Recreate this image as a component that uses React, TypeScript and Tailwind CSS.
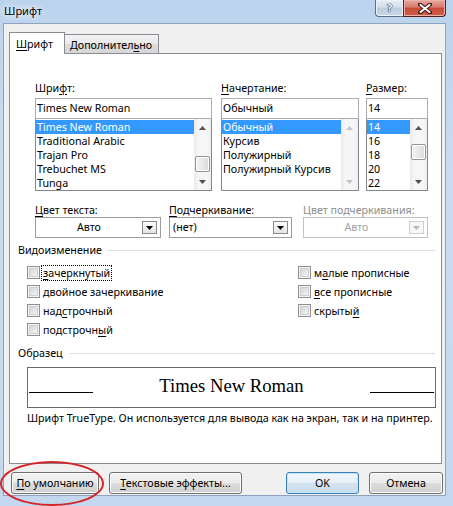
import React from "react";

const FONT = "font-['Noto_Sans','Open_Sans',sans-serif]";

function U({ children }: { children: React.ReactNode }) {
  return <span className="underline decoration-1 underline-offset-[2px]">{children}</span>;
}

function Arrow({ up, disabled }: { up?: boolean; disabled?: boolean }) {
  return (
    <div className="flex h-[17px] w-full items-center justify-center">
      <svg width="7" height="4" viewBox="0 0 7 4">
        <polygon
          points={up ? "0,4 3.5,0 7,4" : "0,0 3.5,4 7,0"}
          fill={disabled ? "#c3c3c3" : "#505050"}
        />
      </svg>
    </div>
  );
}

function Scrollbar({ thumb, disabled }: { thumb?: string; disabled?: boolean }) {
  return (
    <div className="flex w-[17px] shrink-0 flex-col bg-[linear-gradient(to_right,#e9e9e9,#f6f6f6_25%,#f6f6f6_75%,#eeeeee)]">
      <Arrow up disabled={disabled} />
      <div className="flex flex-1 flex-col px-[1px]">
        {thumb ? (
          <div
            className={`${thumb} rounded-[2px] border border-[#979797] bg-[linear-gradient(to_right,#f4f4f4,#e9e9e9_50%,#d9d9d9)] shadow-[inset_0_0_0_1px_#ffffff]`}
          />
        ) : null}
      </div>
      <Arrow disabled={disabled} />
    </div>
  );
}

function FontList({
  value,
  items,
  width,
  thumb,
  disabled,
}: {
  value: string;
  items: string[];
  width: string;
  thumb?: string;
  disabled?: boolean;
}) {
  return (
    <div className={`${width} flex flex-col`}>
      <div className="flex h-[21px] items-center border border-[#abadb3] bg-white pl-[1px] leading-[19px]">
        {value}
      </div>
      <div className="flex h-[72px] border border-t-0 border-[#828790] bg-white">
        <div className="flex min-w-0 flex-1 flex-col pt-[1px]">
          {items.map((it, i) => (
            <div
              key={it}
              className={`h-[14px] whitespace-nowrap pl-[1px] leading-[14px] ${
                i === 0 ? "bg-[#3399ff] text-white" : ""
              }`}
            >
              {it}
            </div>
          ))}
        </div>
        <Scrollbar thumb={thumb} disabled={disabled} />
      </div>
    </div>
  );
}

function Dropdown({
  width,
  text,
  center,
  disabled,
}: {
  width: string;
  text: string;
  center?: boolean;
  disabled?: boolean;
}) {
  return (
    <div
      className={`${width} flex h-[21px] items-center border bg-white ${
        disabled ? "border-[#c2c2c2] text-[#a3a3a3]" : "border-[#9c9c9c]"
      }`}
    >
      <div className={`flex-1 ${center ? "text-center" : "pl-[3px]"} leading-[19px]`}>{text}</div>
      <div
        className={`mr-[3px] flex h-[13px] w-[15px] items-center justify-center border ${
          disabled
            ? "border-[#cfcfcf] bg-[#f7f7f7]"
            : "border-[#8a8a8a] bg-[linear-gradient(#fdfdfd,#e4e4e4)]"
        }`}
      >
        <svg width="7" height="4" viewBox="0 0 7 4">
          <polygon points="0,0 3.5,4 7,0" fill={disabled ? "#b5b5b5" : "#000000"} />
        </svg>
      </div>
    </div>
  );
}

function Check({ children, focus }: { children: React.ReactNode; focus?: boolean }) {
  return (
    <div className="flex h-[19px] items-center">
      <div className="flex h-[13px] w-[13px] shrink-0 items-center justify-center border border-[#8f8f8f] bg-[#f4f4f4]">
        <div className="h-[9px] w-[9px] border border-[#cdcfd2] bg-[linear-gradient(135deg,#d3d6d9,#f4f4f4)]" />
      </div>
      <div
        className={`ml-[1px] border border-dotted pl-[1px] pr-[1px] leading-[14px] ${
          focus ? "border-black" : "border-transparent"
        }`}
      >
        {children}
      </div>
    </div>
  );
}

function GroupLabel({ text, gap }: { text: string; gap: string }) {
  return (
    <div className="flex h-[14px] items-center pl-[8px] pr-[6px]">
      <span className="leading-[14px]">{text}</span>
      <div className={`${gap} h-px flex-1 bg-[#d5dfe5]`} />
    </div>
  );
}

function Btn({
  width,
  children,
  primary,
  className = "",
}: {
  width: string;
  children: React.ReactNode;
  primary?: boolean;
  className?: string;
}) {
  return (
    <div
      className={`${width} ${className} flex h-[22px] items-center justify-center rounded-[3px] border ${
        primary
          ? "border-[#3c7fb1] bg-[linear-gradient(#f1f7fc,#e6eff7_50%,#d5e3ef_50%,#c9dbea)] shadow-[inset_0_0_0_1px_#bfe6fb]"
          : "border-[#707070] bg-[linear-gradient(#f2f2f2,#ebebeb_50%,#dddddd_50%,#cfcfcf)] shadow-[inset_0_0_0_1px_#fbfbfb]"
      }`}
    >
      <span className="leading-[14px]">{children}</span>
    </div>
  );
}

export default function App() {
  return (
    <div
      className={`relative flex h-[506px] w-[453px] flex-col overflow-hidden bg-[linear-gradient(180deg,#bcd3ed_0%,#cadcf1_35%,#c3d8ef_100%)] text-[10.7px] leading-[14px] text-black ${FONT}`}
    >
      {/* Title bar */}
      <div className="flex h-[23px] shrink-0 items-start justify-between">
        <div className="pl-[4px] pt-[4px] text-[11px] leading-[14px] [text-shadow:0_0_6px_#ffffff,0_0_10px_#ffffff]">
          Шрифт
        </div>
        <div className="mr-[7px] flex">
          <div className="flex h-[17px] w-[28px] items-center justify-center rounded-bl-[4px] border border-t-0 border-r-0 border-[#5d6e86] bg-[linear-gradient(#e7eef6,#d3deea_45%,#bccde0_50%,#c9d8e8)] shadow-[inset_0_0_0_1px_#eef3f9]">
            <span className="text-[11px] font-bold leading-[14px] text-[#f4f7fb] [text-shadow:0_0_1px_#27384f,0_0_1px_#27384f,0_0_1px_#27384f]">
              ?
            </span>
          </div>
          <div className="flex h-[17px] w-[43px] items-center justify-center rounded-br-[4px] border border-t-0 border-[#52211d] bg-[linear-gradient(#e8a99f,#d77a6c_45%,#c74a38_50%,#d1604b)] shadow-[inset_0_0_0_1px_#eab3a9]">
            <svg width="14" height="11" viewBox="0 0 14 11">
              <path d="M2 1.5 L12 9.5 M12 1.5 L2 9.5" stroke="#3a1410" strokeWidth="4" strokeLinecap="round" />
              <path d="M2.5 2 L11.5 9 M11.5 2 L2.5 9" stroke="#ffffff" strokeWidth="2.2" strokeLinecap="round" />
            </svg>
          </div>
        </div>
      </div>

      {/* Client area */}
      <div className="mb-[10px] ml-[3px] mr-[7px] flex flex-1 flex-col border border-[#8ea4be] bg-[#f0f0f0]">
        {/* Tabs */}
        <div className="mt-[8px] flex h-[21px] items-end pl-[5px]">
          <div className="relative z-10 mb-[-1px] h-[22px] w-[56px] border border-b-0 border-[#898c95] bg-white pl-[6px] pt-[4px]">
            <span className="leading-[14px]">
              <U>Ш</U>рифт
            </span>
          </div>
          <div className="h-[19px] w-[94px] border border-b-0 border-l-0 border-[#898c95] bg-[linear-gradient(#f3f3f3,#e9e9e9_50%,#dcdcdc_50%,#d7d7d7)] pl-[5px] pt-[3px]">
            <span className="leading-[14px]">
              Дополнител<U>ь</U>но
            </span>
          </div>
        </div>

        {/* Panel */}
        <div className="ml-[5px] flex h-[411px] w-[433px] flex-col border border-[#898c95] bg-white">
          {/* Row 1: lists */}
          <div className="ml-[25px] mt-[27px] flex">
            <div className="flex flex-col">
              <div className="mb-[3px] h-[14px]">
                Шри<U>ф</U>т:
              </div>
              <FontList
                width="w-[177px]"
                value="Times New Roman"
                items={["Times New Roman", "Traditional Arabic", "Trajan Pro", "Trebuchet MS", "Tunga"]}
                thumb="mt-[20px] h-[16px]"
              />
            </div>
            <div className="ml-[9px] flex flex-col">
              <div className="mb-[3px] h-[14px]">
                <U>Н</U>ачертание:
              </div>
              <FontList
                width="w-[138px]"
                value="Обычный"
                items={["Обычный", "Курсив", "Полужирный", "Полужирный Курсив"]}
                disabled
              />
            </div>
            <div className="ml-[7px] flex flex-col">
              <div className="mb-[3px] h-[14px]">
                <U>Р</U>азмер:
              </div>
              <FontList
                width="w-[62px]"
                value="14"
                items={["14", "16", "18", "20", "22"]}
                thumb="mt-[8px] h-[16px]"
              />
            </div>
          </div>

          {/* Row 2: dropdowns */}
          <div className="ml-[25px] mt-[12px] flex">
            <div className="flex flex-col">
              <div className="h-[14px]">
                <U>Ц</U>вет текста:
              </div>
              <Dropdown width="w-[126px]" text="Авто" center />
            </div>
            <div className="ml-[8px] flex flex-col">
              <div className="h-[14px]">
                <U>П</U>одчеркивание:
              </div>
              <Dropdown width="w-[123px]" text="(нет)" />
            </div>
            <div className="ml-[11px] flex flex-col">
              <div className="h-[14px] text-[#8d8d8d]">Цвет подчеркивания:</div>
              <Dropdown width="w-[125px]" text="Авто" center disabled />
            </div>
          </div>

          {/* Effects */}
          <div className="mt-[5px]">
            <GroupLabel text="Видоизменение" gap="ml-[5px]" />
          </div>
          <div className="ml-[17px] mt-[6px] grid grid-cols-[271px_1fr]">
            <div className="flex flex-col">
              <Check focus>
                <U>з</U>ачеркнутый
              </Check>
              <Check>двойное зачеркивание</Check>
              <Check>
                над<U>с</U>трочный
              </Check>
              <Check>
                подстрочн<U>ы</U>й
              </Check>
            </div>
            <div className="flex flex-col">
              <Check>
                м<U>а</U>лые прописные
              </Check>
              <Check>
                <U>в</U>се прописные
              </Check>
              <Check>
                скрыты<U>й</U>
              </Check>
            </div>
          </div>

          {/* Sample */}
          <div className="mt-[7px]">
            <GroupLabel text="Образец" gap="ml-[7px]" />
          </div>
          <div className="ml-[17px] mt-[7px] flex h-[41px] w-[409px] items-start border border-[#6b6b6b] bg-white">
            <div className="ml-[1px] mt-[24px] h-px w-[64px] bg-black" />
            <div className="mt-[7px] flex-1 text-center font-['Liberation_Serif','Times_New_Roman',serif] text-[18.67px] leading-[21px]">
              Times New Roman
            </div>
            <div className="mr-[1px] mt-[24px] h-px w-[64px] bg-black" />
          </div>
          <div className="ml-[17px] mt-[3px] h-[14px] whitespace-nowrap">
            Шрифт TrueType. Он используется для вывода как на экран, так и на принтер.
          </div>
        </div>

        {/* Buttons */}
        <div className="mt-[8px] flex pl-[7px]">
          <Btn width="w-[88px]">
            <U>П</U>о умолчанию
          </Btn>
          <Btn width="w-[133px]" className="ml-[10px]">
            <U>Т</U>екстовые эффекты...
          </Btn>
          <Btn width="w-[73px]" className="ml-[44px]" primary>
            OK
          </Btn>
          <Btn width="w-[74px]" className="ml-[10px]">
            Отмена
          </Btn>
        </div>
      </div>

      {/* Red annotation ellipse */}
      <div className="pointer-events-none absolute left-0 top-[461px] h-[45px] w-[104px] rounded-[50%] border-2 border-[#d3262b]" />
    </div>
  );
}
